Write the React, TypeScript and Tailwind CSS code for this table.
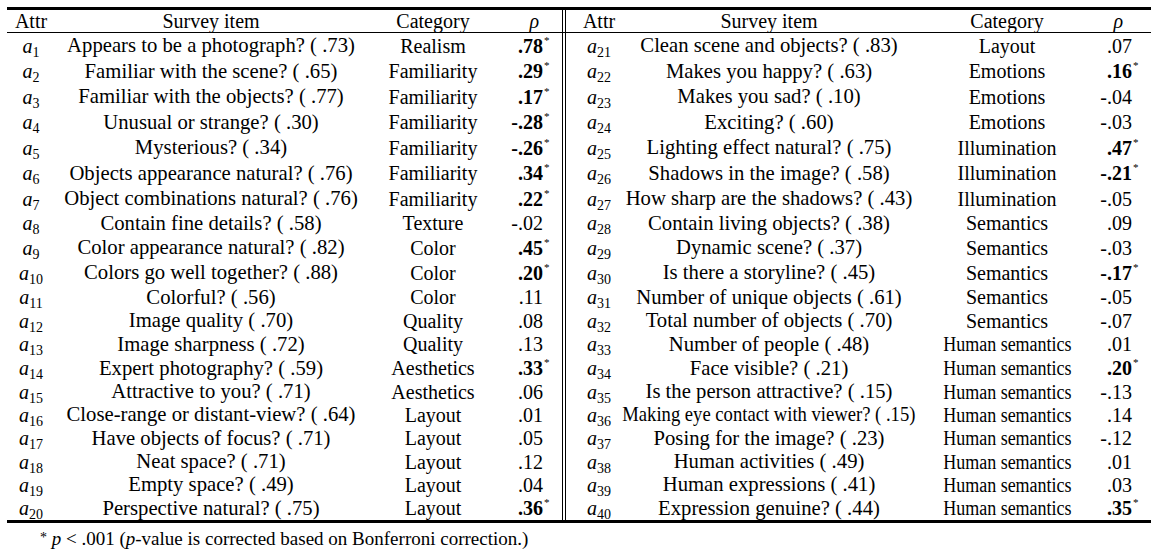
import React from "react";

type Row = [number, string, string, string, boolean];

const left: Row[] = [
  [1, "Appears to be a photograph? ( .73)", "Realism", ".78", true],
  [2, "Familiar with the scene? ( .65)", "Familiarity", ".29", true],
  [3, "Familiar with the objects? ( .77)", "Familiarity", ".17", true],
  [4, "Unusual or strange? ( .30)", "Familiarity", "-.28", true],
  [5, "Mysterious? ( .34)", "Familiarity", "-.26", true],
  [6, "Objects appearance natural? ( .76)", "Familiarity", ".34", true],
  [7, "Object combinations natural? ( .76)", "Familiarity", ".22", true],
  [8, "Contain fine details? ( .58)", "Texture", "-.02", false],
  [9, "Color appearance natural? ( .82)", "Color", ".45", true],
  [10, "Colors go well together? ( .88)", "Color", ".20", true],
  [11, "Colorful? ( .56)", "Color", ".11", false],
  [12, "Image quality ( .70)", "Quality", ".08", false],
  [13, "Image sharpness ( .72)", "Quality", ".13", false],
  [14, "Expert photography? ( .59)", "Aesthetics", ".33", true],
  [15, "Attractive to you? ( .71)", "Aesthetics", ".06", false],
  [16, "Close-range or distant-view? ( .64)", "Layout", ".01", false],
  [17, "Have objects of focus? ( .71)", "Layout", ".05", false],
  [18, "Neat space? ( .71)", "Layout", ".12", false],
  [19, "Empty space? ( .49)", "Layout", ".04", false],
  [20, "Perspective natural? ( .75)", "Layout", ".36", true],
];

const right: Row[] = [
  [21, "Clean scene and objects? ( .83)", "Layout", ".07", false],
  [22, "Makes you happy? ( .63)", "Emotions", ".16", true],
  [23, "Makes you sad? ( .10)", "Emotions", "-.04", false],
  [24, "Exciting? ( .60)", "Emotions", "-.03", false],
  [25, "Lighting effect natural? ( .75)", "Illumination", ".47", true],
  [26, "Shadows in the image? ( .58)", "Illumination", "-.21", true],
  [27, "How sharp are the shadows? ( .43)", "Illumination", "-.05", false],
  [28, "Contain living objects? ( .38)", "Semantics", ".09", false],
  [29, "Dynamic scene? ( .37)", "Semantics", "-.03", false],
  [30, "Is there a storyline? ( .45)", "Semantics", "-.17", true],
  [31, "Number of unique objects ( .61)", "Semantics", "-.05", false],
  [32, "Total number of objects ( .70)", "Semantics", "-.07", false],
  [33, "Number of people ( .48)", "Human semantics", ".01", false],
  [34, "Face visible? ( .21)", "Human semantics", ".20", true],
  [35, "Is the person attractive? ( .15)", "Human semantics", "-.13", false],
  [36, "Making eye contact with viewer? ( .15)", "Human semantics", ".14", false],
  [37, "Posing for the image? ( .23)", "Human semantics", "-.12", false],
  [38, "Human activities ( .49)", "Human semantics", ".01", false],
  [39, "Human expressions ( .41)", "Human semantics", ".03", false],
  [40, "Expression genuine? ( .44)", "Human semantics", ".35", true],
];

const heights = [
  "h-[25.5px]", "h-[25.5px]", "h-[25.5px]", "h-[25.5px]", "h-[25.5px]",
  "h-[25.5px]", "h-[25.5px]", "h-[23.5px]", "h-[25px]", "h-[25px]",
  "h-[24px]", "h-[23.5px]", "h-[23.5px]", "h-[24px]", "h-[23px]",
  "h-[23px]", "h-[24px]", "h-[23px]", "h-[23px]", "h-[24px]",
];

const grid =
  "grid grid-cols-[48px_312px_132px_63px_4px_66px_274px_202px_43px]";

function Attr({ n }: { n: number }) {
  return (
    <span className="whitespace-nowrap">
      <span className="italic">a</span>
      <span className="relative top-[4px] text-[14px]">{n}</span>
    </span>
  );
}

function Val({ v, star }: { v: string; star: boolean }) {
  return (
    <span className="whitespace-nowrap">
      <span className={star ? "font-bold" : ""}>{v}</span>
      {star && (
        <span className="inline-block w-0 relative -top-[9px] left-[1px] text-[11px] font-normal">
          *
        </span>
      )}
    </span>
  );
}

function Cat({ c }: { c: string }) {
  if (c === "Human semantics") {
    return (
      <span className="inline-block whitespace-nowrap scale-x-[0.9]">{c}</span>
    );
  }
  return <span className="whitespace-nowrap">{c}</span>;
}

function Item({ t }: { t: string }) {
  if (t.startsWith("Making eye")) {
    return (
      <span className="inline-block whitespace-nowrap text-[20.7px] scale-x-[0.9]">
        {t}
      </span>
    );
  }
  return <span className="whitespace-nowrap text-[20.7px]">{t}</span>;
}

function Half({ r }: { r: Row }) {
  return (
    <>
      <div className="flex items-center justify-center">
        <Attr n={r[0]} />
      </div>
      <div className="flex items-center justify-center">
        <Item t={r[1]} />
      </div>
      <div className="flex items-center justify-center">
        <Cat c={r[2]} />
      </div>
      <div className="flex items-center justify-end pr-[19px]">
        <Val v={r[3]} star={r[4]} />
      </div>
    </>
  );
}

export default function App() {
  return (
    <div
      className="w-[1156px] h-[549px] bg-white text-black text-[20px] leading-none overflow-hidden"
      style={{ fontFamily: '"Liberation Serif", "Times New Roman", serif' }}
    >
      <div className="ml-[7px] w-[1144px] mt-[7px] border-t-[3px] border-b-[3px] border-black">
        <div className={`${grid} h-[23px] border-b border-black`}>
          <div className="flex items-center justify-center">Attr</div>
          <div className="flex items-center justify-center">Survey item</div>
          <div className="flex items-center justify-center">Category</div>
          <div className="flex items-center justify-end pr-[23px] italic">ρ</div>
          <div className="border-x border-black" />
          <div className="flex items-center justify-center">Attr</div>
          <div className="flex items-center justify-center">Survey item</div>
          <div className="flex items-center justify-center">Category</div>
          <div className="flex items-center justify-end pr-[28px] italic">ρ</div>
        </div>
        {left.map((l, i) => (
          <div key={l[0]} className={`${grid} ${heights[i]}`}>
            <Half r={l} />
            <div className="border-x border-black" />
            <Half r={right[i]} />
          </div>
        ))}
      </div>
      <div className="pl-[40px] pt-[6px] text-[19px] leading-[20px] whitespace-nowrap">
        <span className="relative top-[-3px] text-[14px]">*</span>{" "}
        <span className="italic">p</span> &lt; .001 (
        <span className="italic">p</span>-value is corrected based on Bonferroni
        correction.)
      </div>
    </div>
  );
}
